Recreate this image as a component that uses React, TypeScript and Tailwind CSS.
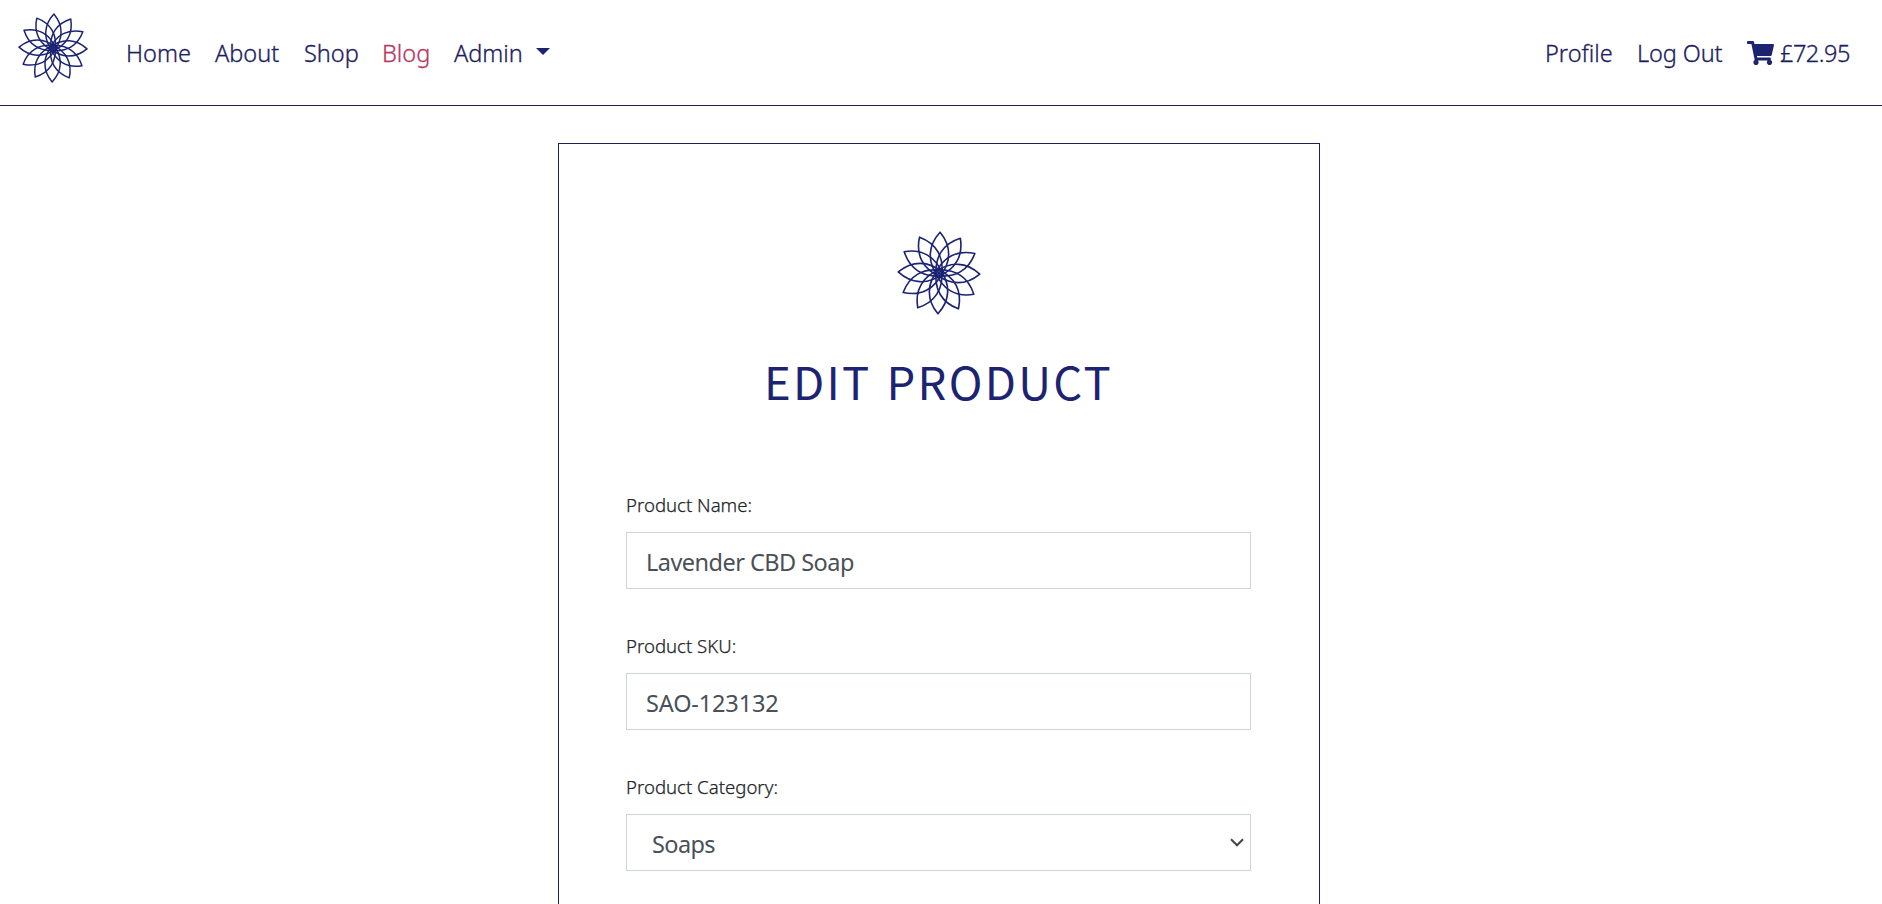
import { FaShoppingCart } from "react-icons/fa";

const PETALS = Array.from({ length: 12 }, (_, i) => i * 30 + 1.5);

function Flower({ className, stroke }: { className: string; stroke: number }) {
  return (
    <svg viewBox="-103 -103 206 206" className={className} fill="none" stroke="#1c2472" strokeWidth={stroke} strokeLinejoin="round">
      {PETALS.map((angle) => (
        <path key={angle} d="M0 -100C28 -68 32 -28 0 12C-32 -28 -28 -68 0 -100Z" transform={`rotate(${angle})`} />
      ))}
      <circle r="5" fill="#1c2472" stroke="none" />
    </svg>
  );
}

function Navbar() {
  return (
    <nav className="flex h-[106px] items-start border-b border-[#1c2250] text-[23.5px] leading-[36px] font-light text-[#1c2060] [-webkit-text-stroke:0.3px]">
      <a href="#" className="mt-[13px] ml-[18px] block">
        <Flower className="size-[70px]" stroke={4.4} />
      </a>
      <div className="mt-[35px] flex pl-[38px]">
        <a href="#" className="w-[89px]">Home</a>
        <a href="#" className="w-[89px]">About</a>
        <a href="#" className="w-[78px]">Shop</a>
        <a href="#" className="w-[72px] text-[#b5395f]">Blog</a>
        <a href="#" className="flex">
          <span className="w-[82px]">Admin</span>
          <span className="mt-[13px] size-0 border-x-[7px] border-t-[7px] border-x-transparent border-t-[#1c2472]" />
        </a>
      </div>
      <div className="mt-[35px] ml-auto flex pr-[31px]">
        <a href="#" className="w-[92px]">Profile</a>
        <a href="#" className="w-[110px] tracking-[-0.1px]">Log Out</a>
        <a href="#" className="flex tracking-[-0.5px]">
          <FaShoppingCart className="mt-[6px] mr-[6px] h-[24px] w-[27px] text-[#1c2472]" />
          <span className="w-[71px]">£72.95</span>
        </a>
      </div>
    </nav>
  );
}

function Label({ children }: { children: string }) {
  return (
    <label className="block h-[27px] text-[18.6px] leading-[25px] font-light text-[#212529] [-webkit-text-stroke:0.25px]">
      {children}
    </label>
  );
}

const control = "block h-[57px] w-full border border-[#ced4da] bg-white text-[23.5px] text-[#495057]";

export default function App() {
  return (
    <div className="h-[904px] overflow-hidden bg-white font-['Noto_Sans','Open_Sans',sans-serif]">
      <Navbar />
      <main className="mx-auto mt-[37px] h-[900px] w-[762px] -translate-x-[2px] border border-[#1c2250] pr-[68px] pl-[67px] pt-[87px]">
        <Flower className="ml-[271px] size-[84px]" stroke={4} />
        <h1 className="mt-[29px] h-[72px] text-center font-['Noto_Sans_CJK_SC','Noto_Sans',sans-serif] text-[45.4px] leading-[72px] tracking-[2.3px] [word-spacing:2.5px] whitespace-nowrap text-[#1c2472]">
          EDIT PRODUCT
        </h1>
        <form className="mt-[76px] flex flex-col gap-[44px]">
          <div className="flex flex-col gap-[13px]">
            <Label>Product Name:</Label>
            <input className={`${control} px-[19px] pt-[3px] tracking-[-0.53px]`} defaultValue="Lavender CBD Soap" />
          </div>
          <div className="flex flex-col gap-[13px]">
            <Label>Product SKU:</Label>
            <input className={`${control} px-[19px] pt-[3px] tracking-[-0.15px]`} defaultValue="SAO-123132" />
          </div>
          <div className="flex flex-col gap-[13px]">
            <Label>Product Category:</Label>
            <div className="grid">
              <select className={`${control} col-start-1 row-start-1 appearance-none pt-[4px] pl-[25px] tracking-[-0.6px]`}>
                <option>Soaps</option>
              </select>
              <svg viewBox="0 0 14 9" className="pointer-events-none col-start-1 row-start-1 mr-[7px] h-[9px] w-[14px] self-center justify-self-end" fill="none" stroke="#444" strokeWidth="2">
                <path d="M1 1.3L7 7.3L13 1.3" />
              </svg>
            </div>
          </div>
        </form>
      </main>
    </div>
  );
}
